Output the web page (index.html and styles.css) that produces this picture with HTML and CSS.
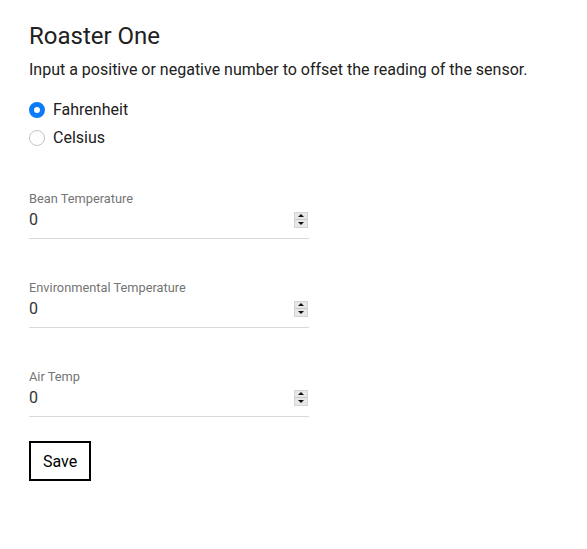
FILE: index.html
```html
<!DOCTYPE html>
<html lang="en">
<head>
    <meta charset="UTF-8">
    <meta name="viewport" content="width=device-width, initial-scale=1.0">
    <title>Roaster One</title>
    <link rel="stylesheet" href="styles.css">
</head>
<body>

<div class="settings">
    <h2>Roaster One</h2>
    <p class="hint">Input a positive or negative number to offset the reading of the sensor.</p>

    <!-- Unit choice -->
    <div class="units">
        <label class="radio"><input type="radio" name="unit" checked> Fahrenheit</label>
        <label class="radio"><input type="radio" name="unit"> Celsius</label>
    </div>

    <!-- Offsets -->
    <div class="field">
        <label for="bean">Bean Temperature</label>
        <div class="value-row">
            <input id="bean" type="number" value="0">
            <span class="spin"><i class="up"></i><i class="down"></i></span>
        </div>
    </div>

    <div class="field">
        <label for="env">Environmental Temperature</label>
        <div class="value-row">
            <input id="env" type="number" value="0">
            <span class="spin"><i class="up"></i><i class="down"></i></span>
        </div>
    </div>

    <div class="field">
        <label for="air">Air Temp</label>
        <div class="value-row">
            <input id="air" type="number" value="0">
            <span class="spin"><i class="up"></i><i class="down"></i></span>
        </div>
    </div>

    <button class="save">Save</button>
</div>

</body>
</html>
```

FILE: styles.css
```css
body {
    margin: 0;
    font-family: Roboto, "Liberation Sans", sans-serif;
    color: #212121;
}

.settings {
    padding: 20px 29px;
}

h2 {
    margin: 0;
    font-size: 24px;
    font-weight: 400;
    line-height: 32px;
}

.hint {
    margin: 6px 0 16px;
    font-size: 16px;
    line-height: 24px;
}

.units {
    display: flex;
    flex-direction: column;
    gap: 4px;
}

.radio {
    display: flex;
    align-items: center;
    gap: 8px;
    font-size: 16px;
    line-height: 24px;
}

.radio input {
    appearance: none;
    box-sizing: border-box;
    width: 16px;
    height: 16px;
    margin: 0;
    border: 1px solid #c4c4c4;
    border-radius: 50%;
    background: #fff;
}

.radio input:checked {
    border: 5px solid #0b7bf7;
}

.field {
    width: 280px;
    margin-top: 40px;
    border-bottom: 1px solid #d8d8de;
}

.field label {
    display: block;
    font-size: 12.8px;
    line-height: 18px;
    color: #757575;
}

.value-row {
    display: flex;
    align-items: center;
    padding: 2px 1px 9px 0;
}

.value-row input {
    flex: 1;
    min-width: 0;
    border: none;
    padding: 0;
    font-family: inherit;
    font-size: 16px;
    line-height: 19px;
    color: #333;
    outline: none;
    appearance: textfield;
}

.value-row input::-webkit-inner-spin-button {
    display: none;
}

/* drawn spinner, like the native one */
.spin {
    display: flex;
    flex-direction: column;
    width: 14px;
    height: 16px;
    background: #e8e8e8;
    border: 1px solid #d4d4d4;
    box-sizing: border-box;
}

.spin i {
    flex: 1;
    display: flex;
    align-items: center;
    justify-content: center;
}

.spin i + i {
    border-top: 1px solid #c8c8c8;
}

.spin i::after {
    content: "";
    border-left: 3px solid transparent;
    border-right: 3px solid transparent;
}

.spin .up::after {
    border-bottom: 3px solid #111;
}

.spin .down::after {
    border-top: 3px solid #111;
}

.save {
    margin-top: 24px;
    height: 40px;
    padding: 0 12px;
    background: #fff;
    border: 2px solid #000;
    font-family: inherit;
    font-size: 16px;
    color: #000;
}
```
